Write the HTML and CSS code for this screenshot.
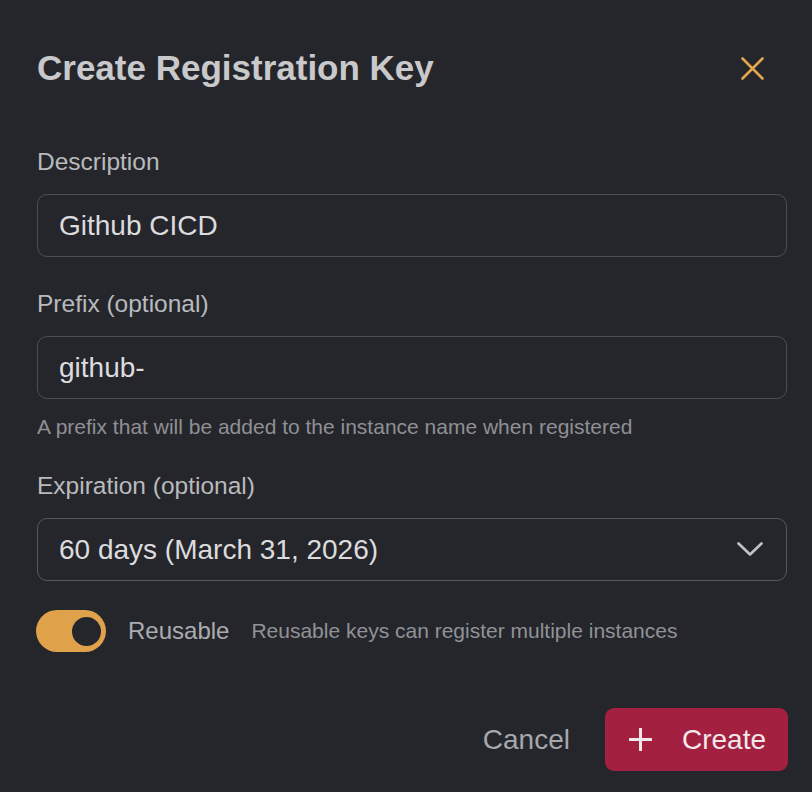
FILE: index.html
```html
<!DOCTYPE html>
<html lang="en">
<head>
<meta charset="utf-8">
<title>Create Registration Key</title>
<link rel="stylesheet" href="styles.css">
</head>
<body>
<div class="dialog">
  <div class="header">
    <h1 class="title">Create Registration Key</h1>
    <button class="close" aria-label="Close">
      <svg width="23" height="23" viewBox="0 0 23 23"><path d="M1.5 1.5 L21.5 21.5 M21.5 1.5 L1.5 21.5" stroke="#e2a64c" stroke-width="2.6" stroke-linecap="round" fill="none"/></svg>
    </button>
  </div>

  <div class="field first">
    <label class="label">Description</label>
    <div class="input">Github CICD</div>
  </div>

  <div class="field">
    <label class="label">Prefix (optional)</label>
    <div class="input">github-</div>
    <div class="hint">A prefix that will be added to the instance name when registered</div>
  </div>

  <div class="field">
    <label class="label">Expiration (optional)</label>
    <div class="input select">
      <span>60 days (March 31, 2026)</span>
      <svg class="chevron" width="26" height="15" viewBox="0 0 26 15"><path d="M1.5 1.5 L13 12.5 L24.5 1.5" stroke="#c1c2c5" stroke-width="2.6" stroke-linecap="round" stroke-linejoin="round" fill="none"/></svg>
    </div>
  </div>

  <div class="switch-row">
    <div class="switch"><div class="knob"></div></div>
    <span class="switch-label">Reusable</span>
    <span class="switch-desc">Reusable keys can register multiple instances</span>
  </div>

  <div class="footer">
    <button class="btn-cancel">Cancel</button>
    <button class="btn-create">
      <svg width="23" height="23" viewBox="0 0 23 23"><path d="M11.5 1 V22 M1 11.5 H22" stroke="#f1e8ea" stroke-width="3" stroke-linecap="round" fill="none"/></svg>
      <span>Create</span>
    </button>
  </div>
</div>
</body>
</html>
```

FILE: styles.css
```css
html, body {
  margin: 0;
  padding: 0;
  background: #25262b;
}

body {
  font-family: "Liberation Sans", Arial, Helvetica, sans-serif;
  width: 812px;
  height: 792px;
  overflow: hidden;
}

.dialog {
  padding: 47px 25px 0 37px;
  display: flex;
  flex-direction: column;
}

.header {
  display: flex;
  align-items: center;
  justify-content: space-between;
  height: 42px;
}

.title {
  margin: 0;
  font-size: 35px;
  line-height: 42px;
  font-weight: 700;
  color: #c9c9cc;
}

.close {
  width: 35px;
  height: 35px;
  margin-right: 17px;
  padding: 0;
  border: 0;
  background: transparent;
  display: flex;
  align-items: center;
  justify-content: center;
}

.field {
  display: flex;
  flex-direction: column;
  margin-top: 33px;
}

.field.first {
  margin-top: 59px;
}

.label {
  font-size: 24.5px;
  line-height: 28px;
  color: #b9babd;
  margin-bottom: 18px;
}

.input {
  box-sizing: border-box;
  height: 63px;
  border: 1.5px solid #4c4f56;
  border-radius: 10px;
  padding: 0 21px;
  display: flex;
  align-items: center;
  font-size: 28px;
  color: #dcdcdf;
}

.select {
  justify-content: space-between;
  border-color: #55585f;
  padding-right: 23px;
}

.chevron {
  display: block;
}

.hint {
  margin-top: 16px;
  font-size: 21px;
  line-height: 24px;
  color: #8f9094;
}

.switch-row {
  display: flex;
  align-items: center;
  margin-top: 29px;
  height: 42px;
}

.switch {
  box-sizing: border-box;
  width: 70px;
  height: 42px;
  margin-left: -1px;
  border-radius: 21px;
  background: #dfa24b;
  display: flex;
  align-items: center;
  justify-content: flex-end;
  padding-right: 5px;
}

.knob {
  width: 29px;
  height: 29px;
  border-radius: 50%;
  background: #25262b;
}

.switch-label {
  margin-left: 22px;
  font-size: 24px;
  color: #abacb0;
}

.switch-desc {
  margin-left: 22px;
  font-size: 21px;
  color: #909296;
}

.footer {
  display: flex;
  justify-content: flex-end;
  align-items: center;
  margin-top: 56px;
  margin-right: -1px;
}

.btn-cancel {
  height: 63px;
  padding: 0 21px;
  margin-right: 14px;
  border: 0;
  background: transparent;
  font-family: inherit;
  font-size: 28px;
  color: #a6a7ab;
}

.btn-create {
  box-sizing: border-box;
  height: 63px;
  width: 183px;
  padding: 0 24px;
  border: 0;
  border-radius: 9px;
  background: #a42040;
  display: flex;
  align-items: center;
  gap: 30px;
  font-family: inherit;
  font-size: 28px;
  color: #f1e8ea;
}

.btn-create svg {
  display: block;
  flex: none;
}
```
